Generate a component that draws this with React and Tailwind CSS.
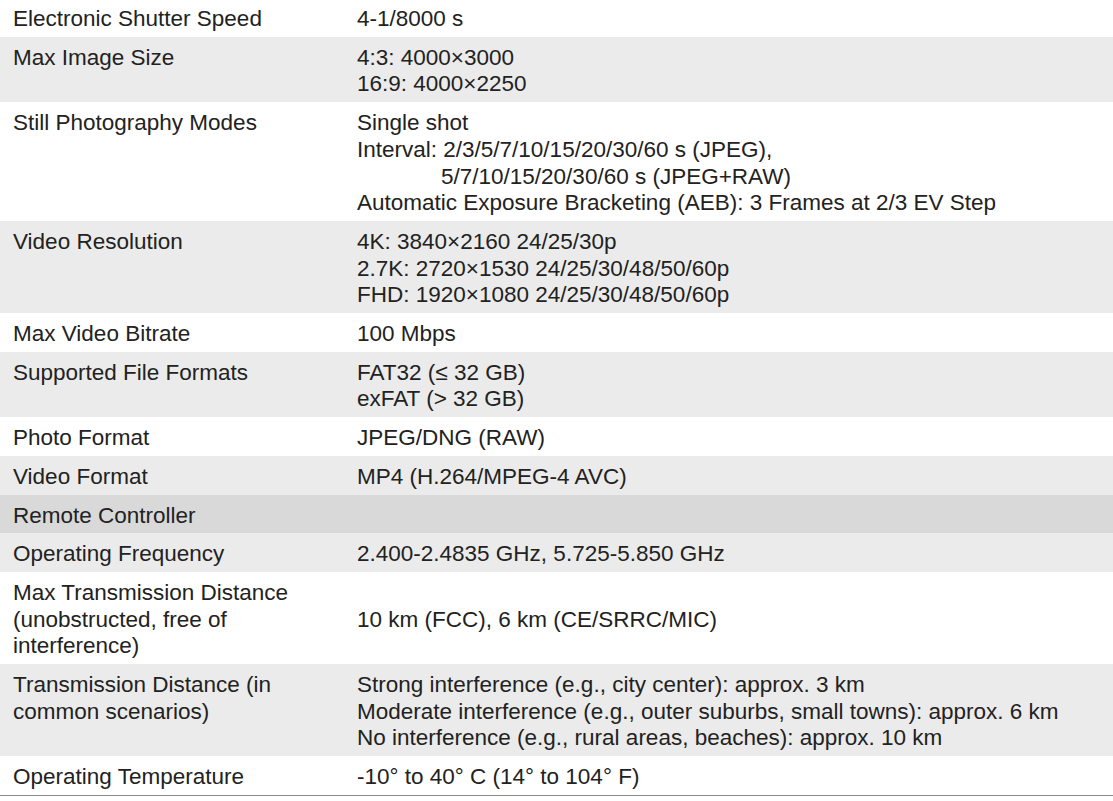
const specs = [
  { label: ["Electronic Shutter Speed"], value: ["4-1/8000 s"], tone: "white", first: true },
  { label: ["Max Image Size"], value: ["4:3: 4000×3000", "16:9: 4000×2250"], tone: "gray" },
  {
    label: ["Still Photography Modes"],
    value: [
      "Single shot",
      "Interval: 2/3/5/7/10/15/20/30/60 s (JPEG),",
      { indent: true, text: "5/7/10/15/20/30/60 s (JPEG+RAW)" },
      "Automatic Exposure Bracketing (AEB): 3 Frames at 2/3 EV Step",
    ],
    tone: "white",
  },
  {
    label: ["Video Resolution"],
    value: ["4K: 3840×2160 24/25/30p", "2.7K: 2720×1530 24/25/30/48/50/60p", "FHD: 1920×1080 24/25/30/48/50/60p"],
    tone: "gray",
  },
  { label: ["Max Video Bitrate"], value: ["100 Mbps"], tone: "white" },
  { label: ["Supported File Formats"], value: ["FAT32 (≤ 32 GB)", "exFAT (> 32 GB)"], tone: "gray" },
  { label: ["Photo Format"], value: ["JPEG/DNG (RAW)"], tone: "white" },
  { label: ["Video Format"], value: ["MP4 (H.264/MPEG-4 AVC)"], tone: "gray" },
  { label: ["Remote Controller"], value: [], tone: "head" },
  { label: ["Operating Frequency"], value: ["2.400-2.4835 GHz, 5.725-5.850 GHz"], tone: "gray" },
  {
    label: ["Max Transmission Distance", "(unobstructed, free of", "interference)"],
    value: ["10 km (FCC), 6 km (CE/SRRC/MIC)"],
    tone: "white",
    center: true,
  },
  {
    label: ["Transmission Distance (in", "common scenarios)"],
    value: [
      "Strong interference (e.g., city center): approx. 3 km",
      "Moderate interference (e.g., outer suburbs, small towns): approx. 6 km",
      "No interference (e.g., rural areas, beaches): approx. 10 km",
    ],
    tone: "gray",
  },
  { label: ["Operating Temperature"], value: ["-10° to 40° C (14° to 104° F)"], tone: "white", last: true },
];

const toneClass = {
  white: "bg-white",
  gray: "bg-[#ebebeb]",
  head: "bg-[#d9d9d9]",
};

export default function App() {
  return (
    <div
      className="w-[1113px] h-[801px] overflow-hidden bg-white text-[#222] text-[22.5px] leading-[26.7px]"
      style={{ fontFamily: "'Liberation Sans', Arial, sans-serif" }}
    >
      {specs.map((row, i) => (
        <div
          key={i}
          className={`flex ${toneClass[row.tone]} ${row.first ? "pt-[6px]" : "pt-[8px]"} pb-[4px] ${
            row.last ? "border-b border-[#8c8c8c]" : ""
          }`}
        >
          <div className="w-[357px] shrink-0 pl-[13px]">
            {row.label.map((l, j) => (
              <div key={j}>{l}</div>
            ))}
          </div>
          <div className={`flex-1 flex flex-col ${row.center ? "justify-center" : ""}`}>
            {row.value.map((v, j) =>
              typeof v === "string" ? (
                <div key={j}>{v}</div>
              ) : (
                <div key={j} className="pl-[84px]">
                  {v.text}
                </div>
              )
            )}
          </div>
        </div>
      ))}
    </div>
  );
}
